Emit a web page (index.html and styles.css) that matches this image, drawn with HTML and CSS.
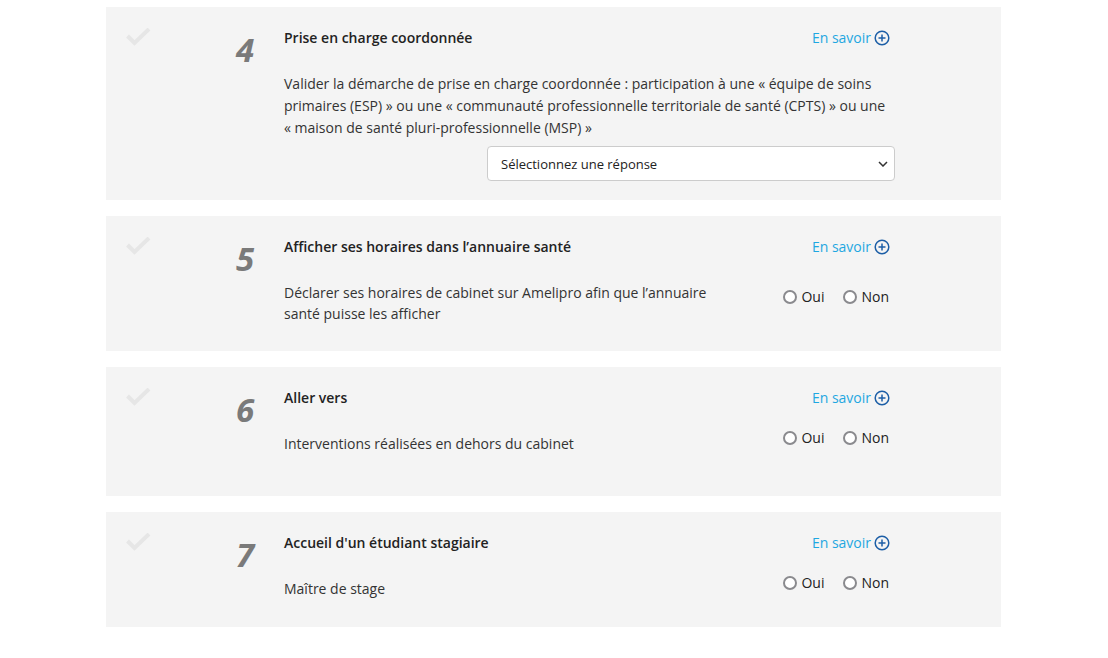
FILE: index.html
```html
<!DOCTYPE html>
<html lang="fr">
<head>
    <meta charset="UTF-8">
    <title>Indicateurs</title>
    <link rel="stylesheet" href="styles.css">
</head>
<body>
    <div class="criteria">

        <div class="card card--select">
            <svg class="check" width="26" height="20" viewBox="0 0 26 20"><polyline points="1.5,8 8.5,15 23,1"/></svg>
            <div class="num">4</div>
            <div class="content">
                <div class="head">
                    <span class="title">Prise en charge coordonnée</span>
                    <a class="more" href="#">En savoir <svg width="16" height="16" viewBox="0 0 16 16"><circle cx="8" cy="8" r="6.8"/><path d="M8 4.5v7M4.5 8h7"/></svg></a>
                </div>
                <p class="desc">Valider la démarche de prise en charge coordonnée : participation à une « équipe de soins primaires (ESP) » ou une « communauté professionnelle territoriale de santé (CPTS) » ou une «&nbsp;maison de santé pluri-professionnelle (MSP) »</p>
                <div class="select-row">
                    <div class="select-wrap">
                        <select>
                            <option>Sélectionnez une réponse</option>
                        </select>
                        <svg class="chevron" width="10" height="6" viewBox="0 0 10 6"><polyline points="1,1 5,5 9,1"/></svg>
                    </div>
                </div>
            </div>
        </div>

        <div class="card">
            <svg class="check" width="26" height="20" viewBox="0 0 26 20"><polyline points="1.5,8 8.5,15 23,1"/></svg>
            <div class="num">5</div>
            <div class="content">
                <div class="head">
                    <span class="title">Afficher ses horaires dans l’annuaire santé</span>
                    <a class="more" href="#">En savoir <svg width="16" height="16" viewBox="0 0 16 16"><circle cx="8" cy="8" r="6.8"/><path d="M8 4.5v7M4.5 8h7"/></svg></a>
                </div>
                <div class="answer-row">
                    <p class="desc desc--short desc--tight">Déclarer ses horaires de cabinet sur Amelipro afin que l’annuaire santé puisse les afficher</p>
                    <div class="radios">
                        <label><input type="radio" name="q5"> Oui</label>
                        <label><input type="radio" name="q5"> Non</label>
                    </div>
                </div>
            </div>
        </div>

        <div class="card card--spaced">
            <svg class="check" width="26" height="20" viewBox="0 0 26 20"><polyline points="1.5,8 8.5,15 23,1"/></svg>
            <div class="num">6</div>
            <div class="content">
                <div class="head">
                    <span class="title">Aller vers</span>
                    <a class="more" href="#">En savoir <svg width="16" height="16" viewBox="0 0 16 16"><circle cx="8" cy="8" r="6.8"/><path d="M8 4.5v7M4.5 8h7"/></svg></a>
                </div>
                <div class="answer-row">
                    <p class="desc desc--short">Interventions réalisées en dehors du cabinet</p>
                    <div class="radios">
                        <label><input type="radio" name="q6"> Oui</label>
                        <label><input type="radio" name="q6"> Non</label>
                    </div>
                </div>
            </div>
        </div>

        <div class="card">
            <svg class="check" width="26" height="20" viewBox="0 0 26 20"><polyline points="1.5,8 8.5,15 23,1"/></svg>
            <div class="num">7</div>
            <div class="content">
                <div class="head">
                    <span class="title">Accueil d'un étudiant stagiaire</span>
                    <a class="more" href="#">En savoir <svg width="16" height="16" viewBox="0 0 16 16"><circle cx="8" cy="8" r="6.8"/><path d="M8 4.5v7M4.5 8h7"/></svg></a>
                </div>
                <div class="answer-row">
                    <p class="desc desc--short">Maître de stage</p>
                    <div class="radios">
                        <label><input type="radio" name="q7"> Oui</label>
                        <label><input type="radio" name="q7"> Non</label>
                    </div>
                </div>
            </div>
        </div>

    </div>
</body>
</html>
```

FILE: styles.css
```css
body {
    margin: 0;
    background: #fff;
    font-family: "Open Sans", "Liberation Sans", sans-serif;
    font-size: 14px;
    color: #333;
}
.criteria {
    width: 895px;
    margin-left: 106px;
    padding-top: 7px;
    display: flex;
    flex-direction: column;
    gap: 16px;
}
.card {
    background: #f4f4f4;
    display: grid;
    grid-template-columns: 110px 48px 1fr;
    padding: 21px 106px 27px 20px;
}
.card--select {
    padding-bottom: 19px;
}
.card--spaced {
    padding-bottom: 41px;
}
.check {
    fill: none;
    stroke: #e6e6e6;
    stroke-width: 4;
}
.num {
    margin-top: 5px;
    font-size: 33px;
    line-height: 33px;
    font-weight: 700;
    font-style: italic;
    color: #7a7a7a;
}
.head {
    display: flex;
    justify-content: space-between;
    align-items: center;
    height: 20px;
    padding-right: 5px;
}
.title {
    font-weight: 600;
    color: #222;
    line-height: 20px;
}
.more {
    color: #1ea7e1;
    text-decoration: none;
    display: flex;
    align-items: center;
    gap: 3px;
    line-height: 18px;
}
.more svg {
    fill: none;
    stroke: #1c5ea6;
    stroke-width: 1.5;
}
.desc {
    margin: 25px 0 0;
    line-height: 22px;
}
.desc--short {
    width: 455px;
}
.desc--tight {
    line-height: 21px;
}
.select-row {
    display: flex;
    justify-content: flex-end;
    margin-top: 7px;
}
.select-wrap {
    position: relative;
}
.select-wrap select {
    appearance: none;
    display: block;
    width: 408px;
    height: 35px;
    padding: 0 13px;
    border: 1px solid #ccc;
    border-radius: 4px;
    background: #fff;
    font-family: inherit;
    font-size: 13px;
    color: #222;
}
.chevron {
    position: absolute;
    right: 7px;
    top: 15px;
    fill: none;
    stroke: #333;
    stroke-width: 1.5;
    pointer-events: none;
}
.answer-row {
    display: flex;
    justify-content: space-between;
    align-items: center;
}
.radios {
    display: flex;
    gap: 19px;
    padding-right: 6px;
    margin-top: 12px;
}
.radios label {
    display: flex;
    align-items: center;
    gap: 4px;
    color: #222;
}
.radios input {
    appearance: none;
    margin: 0;
    width: 14px;
    height: 14px;
    border: 2px solid #8a8a8e;
    border-radius: 50%;
    background: #fff;
}
```
